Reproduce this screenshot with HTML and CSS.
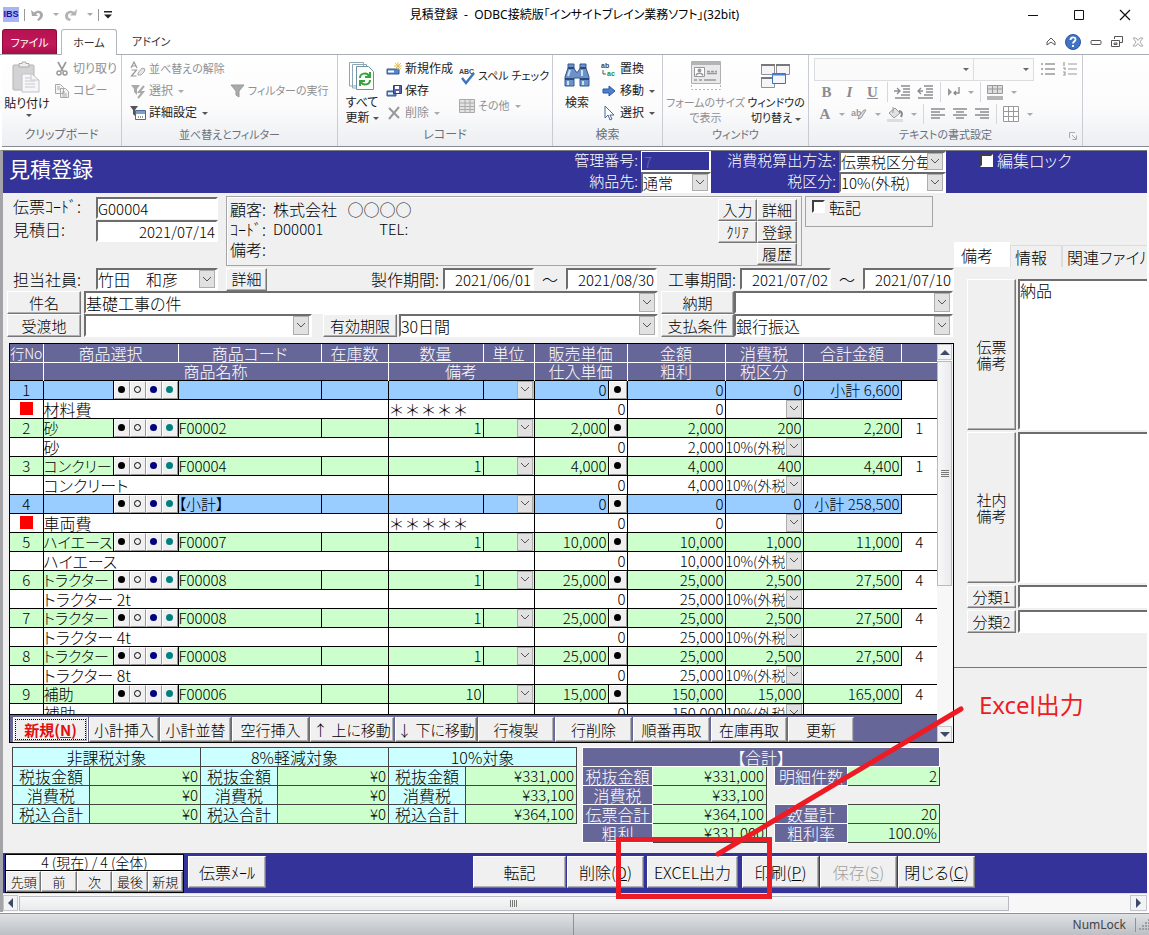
FILE: index.html
```html
<!DOCTYPE html>
<html lang="ja">
<head>
<meta charset="utf-8">
<title>見積登録</title>
<link rel="stylesheet" href="styles.css">
</head>
<body>
<header class="titlebar">
  <div class="quick">
    <span class="logo">IBS</span>
    <i class="sep"></i>
    <svg width="14" height="14" viewBox="0 0 14 14"><path d="M1 2l1 6h6L6 6c2-2 4-1 4 1 0 1.500-1 3-3 4.500l1.500 1.500C11 11.500 13 9.500 13 7c0-4-5-6-9-2.500z" fill="#a9a9ad"/></svg>
    <i class="caret dim"></i>
    <svg width="14" height="14" viewBox="0 0 14 14"><path d="M13 1l-1 6.500H6l2-2C5.500 4.500 4 6 4 8c0 1.500 1 2.500 3 3l-1 2C3 12.500 1 11 1 8c0-4 5-7 9-4z" fill="#b4b4b8"/></svg>
    <i class="caret dim"></i>
    <i class="sep"></i>
    <svg width="8" height="8" viewBox="0 0 8 8"><path d="M0 0h8v1.500H0zM0 3.500h8L4 7.500z" fill="#222"/></svg>
  </div>
  <h1 class="apptitle">見積登録&nbsp; -&nbsp; ODBC接続版「インサイトブレイン業務ソフト」(32bit)</h1>
  <div class="winbtns">
    <button aria-label="最小化"><svg width="12" height="12"><path d="M1 6.500h10" stroke="#111"/></svg></button>
    <button aria-label="最大化"><svg width="12" height="12"><path d="M1.500 1.500h9v9h-9z" fill="none" stroke="#111"/></svg></button>
    <button aria-label="閉じる"><svg width="12" height="12"><path d="M1 1l10 10M11 1L1 11" stroke="#111" stroke-width="1.200"/></svg></button>
  </div>
</header>
<nav class="tabs">
  <button class="tab file">ファイル</button>
  <button class="tab home">ホーム</button>
  <button class="tab">アドイン</button>
  <div class="tabtools">
    <svg width="10" height="10"><path d="M1 5L5 1l4 4v3L5 5 1 8z" fill="#fff" stroke="#555"/></svg>
    <svg width="16" height="16"><circle cx="8" cy="8" r="7.500" fill="#3f74c4" stroke="#2f559c"/><path d="M5.500 6c0-3.500 5-3.500 5-.5 0 2-2.500 2-2.500 4M8 11v2" fill="none" stroke="#fff" stroke-width="1.800"/></svg>
    <svg width="12" height="12"><rect x="1" y="4.500" width="10" height="4" rx="1" fill="#fff" stroke="#555"/></svg>
    <svg width="12" height="12"><path d="M3.500 3V.5h8v6H9M.5 4.500h8v6h-8zM3 7h3v1.500H3z" fill="none" stroke="#555"/></svg>
    <svg width="12" height="10"><path d="M1 1h3l2 2.500L8 1h3L8 5l3 4H8L6 6.500 4 9H1l3-4z" fill="none" stroke="#aaa"/></svg>
  </div>
</nav>
<section class="ribbon">
  <div class="group g1">
    <div class="gbody">
      <button class="big">
        <svg width="30" height="32" viewBox="0 0 30 32"><rect x="1" y="4" width="21" height="25" rx="1" fill="#d3d3d6" stroke="#b4b4b8"/><path d="M7 6V2.500h3V1h4v1.500h3V6z" fill="#eee" stroke="#aaa"/><path d="M10 13h10l7 6v12H10z" fill="#f6f6f8" stroke="#c3c3c8"/><path d="M13 17h6M13 20h10M13 23h10M13 26h10M19 13v6h8" fill="none" stroke="#c9c9d0"/></svg>
        <span>貼り付け</span><i class="caret"></i>
      </button>
      <div class="col">
        <button class="item off"><svg width="16" height="16"><path d="M4 1l5 9M12 1L7 10" stroke="#999" stroke-width="1.600"/><circle cx="5" cy="12" r="2" fill="none" stroke="#999" stroke-width="1.500"/><circle cx="11" cy="12" r="2" fill="none" stroke="#999" stroke-width="1.500"/></svg>切り取り</button>
        <button class="item off"><svg width="16" height="16"><path d="M1.500 1.500h5l3 3v6h-8zM6.500 5.500h5l3 3v6h-8zM3 4h3M3 6h4M8 9h3M8 11h5M8 13h5" fill="#f4f4f4" stroke="#a9a9ad"/></svg>コピー</button>
      </div>
    </div>
    <div class="glabel">クリップボード</div>
  </div>
  <div class="group g2">
    <div class="gbody">
      <div class="col">
        <button class="item off"><svg width="16" height="16"><path d="M1 7l3-6 3 6M2 5h4M1.500 9h5l-5 6h5" fill="none" stroke="#999" stroke-width="1.200"/><path d="M8 12l4-5 3 1-1 3-3 3H8z" fill="#e6e6ea" stroke="#aaa"/></svg><span class="sm">並べ替えの解除</span></button>
        <button class="item off"><svg width="16" height="16"><path d="M1 2h9L7 6v6L4 9V6z" fill="#aaa"/><path d="M14 3L9 9h4l-5 6" fill="none" stroke="#aaa" stroke-width="2"/></svg>選択<i class="caret dim"></i></button>
        <button class="item"><svg width="16" height="16"><path d="M0 1h8L5 5v6L3 9V5z" fill="#555"/><path d="M5.500 5.500h10v9h-10z" fill="#fff" stroke="#49699f"/><path d="M6 6h9v3H6z" fill="#7c9ed0"/><path d="M8 12h1M10 12h1M12 12h1" stroke="#333"/></svg>詳細設定<i class="caret"></i></button>
      </div>
      <div class="col filter">
        <button class="item off"><svg width="16" height="16"><path d="M2 2h13L10 8v6L7 12V8z" fill="#aaaaae" stroke="#999"/></svg><span class="sm">フィルターの実行</span></button>
      </div>
    </div>
    <div class="glabel sm">並べ替えとフィルター</div>
  </div>
  <div class="group g3">
    <div class="gbody">
      <button class="big">
        <svg width="28" height="30" viewBox="0 0 28 30"><path d="M1.500 1.500h14V25h-14zM4.500 3.500h14V27h-14z" fill="#fff" stroke="#8fa7b5"/><path d="M8.500 5.500h12l5 5v18h-17z" fill="#fff" stroke="#6f90a5"/><path d="M12 17c0-5 7-6 9-2M22 11v5h-5M22 19c0 5-7 6-9 2M12 25v-5h5" fill="none" stroke="#36a33c" stroke-width="2"/></svg>
        <span>すべて<br>更新<i class="caret"></i></span>
      </button>
      <div class="col">
        <button class="item"><svg width="16" height="16"><path d="M1 8h12v5H1z" fill="#5b84c2" stroke="#34598f"/><path d="M2 9.500h6v2H2z" fill="#fff"/><path d="M12 1v8M8 5h8M9 2l6 6M15 2L9 8" stroke="#e6bf4c"/></svg>新規作成</button>
        <button class="item"><svg width="16" height="16"><path d="M1 8h9v5H1z" fill="#5b84c2" stroke="#34598f"/><path d="M2 9.500h5v2H2z" fill="#fff"/><path d="M7.500 2.500h8v8h-8z" fill="#5d63a8" stroke="#343a80"/><path d="M9 3h4v3H9zM10 8h3v2h-3z" fill="#fff"/></svg>保存</button>
        <button class="item off"><svg width="16" height="16"><path d="M3 3l10 10M13 2L3 14" stroke="#999" stroke-width="2"/></svg>削除<i class="caret dim"></i></button>
      </div>
      <div class="col two">
        <button class="item"><svg width="16" height="18"><text x="0" y="7" class="tiny">ABC</text><path d="M3 11l4 5 8-10" fill="none" stroke="#3f73bb" stroke-width="2.400"/></svg><span class="sm">スペル チェック</span></button>
        <button class="item off"><svg width="16" height="16"><path d="M.5 1.500h15v13H.5zM0 5h16M0 8.500h16M0 11.500h16M6 1v13M11 1v13" fill="#e3e3e6" stroke="#aaa"/></svg><span class="sm">その他</span><i class="caret dim"></i></button>
      </div>
    </div>
    <div class="glabel">レコード</div>
  </div>
  <div class="group g4">
    <div class="gbody">
      <button class="big">
        <svg width="28" height="30" viewBox="0 0 28 30"><path d="M5 3h6v4l2 4h2l2-4V3h6v4l3 9v9h-9v-8h-6v8H2v-9l3-9z" fill="#6c93c9" stroke="#38598d"/><path d="M2 18h9M17 18h9M5 7h6M17 7h6" stroke="#2d4a7c" stroke-width="2"/><path d="M5 20v4M20 20v4M7 9l-2 6M19 9v6" stroke="#cfe0f5" stroke-width="2"/></svg>
        <span>検索</span>
      </button>
      <div class="col">
        <button class="item"><svg width="16" height="16"><text x="0" y="7" class="tiny">ab</text><text x="6" y="15" class="tiny green">ac</text><path d="M2 9v4h3" fill="none" stroke="#555"/></svg>置換</button>
        <button class="item"><svg width="16" height="16"><path d="M2 6h6V3l6 5-6 5v-3H2z" fill="#4e80d0" stroke="#2b569e"/></svg>移動<i class="caret"></i></button>
        <button class="item"><svg width="16" height="16"><path d="M4 1v12l3-3 2 5 2-1-2-4h4z" fill="#fff" stroke="#49699f"/></svg>選択<i class="caret"></i></button>
      </div>
    </div>
    <div class="glabel">検索</div>
  </div>
  <div class="group g5">
    <div class="gbody">
      <button class="big off">
        <svg width="32" height="30" viewBox="0 0 32 30"><path d="M1.500.5h29v22h-29z" fill="#e9e9ec" stroke="#b0b0b4"/><path d="M1 1h30v3H1z" fill="#b4b4b8"/><path d="M1.500 24v4.500h29V24" fill="none" stroke="#b5b5b8" stroke-dasharray="2 2"/><path d="M4.500 6.500h10v9h-10z" fill="#fff" stroke="#999"/><circle cx="9.500" cy="9.500" r="2" fill="#999"/><path d="M6 14.500c1-3 6-3 7 0M17 10.500h3M21 10.500h3M25 10.500h2M17 12.500h10M4 19h3M9 19h3M14 19h12" stroke="#999" fill="none" stroke-width="1.500"/></svg>
        <span class="sm">フォームのサイズ<br>で表示</span>
      </button>
      <button class="big">
        <svg width="32" height="30" viewBox="0 0 32 30"><path d="M1.500 3.500h13v10h-13zM16.500 3.500h13v10h-13zM1.500 16.500h13v10h-13z" fill="#f5f5f7" stroke="#8f8f94"/><path d="M1 4h14M16 4h14M1 17h14" stroke="#77777c" stroke-width="2"/><path d="M12.500 12.500h13v10h-13z" fill="#f3f8ff" stroke="#3e6fbe"/><path d="M12 13.500h14" stroke="#4a7ed0" stroke-width="2"/></svg>
        <span class="sm">ウィンドウの<br>切り替え<i class="caret"></i></span>
      </button>
    </div>
    <div class="glabel sm">ウィンドウ</div>
  </div>
  <div class="group g6">
    <div class="gbody text">
      <div class="trow">
        <select class="fontsel wide" aria-label="フォント" disabled><option></option></select>
        <select class="fontsel" aria-label="フォント サイズ" disabled><option></option></select>
        <svg class="lst" width="16" height="14"><path d="M5 2h10M5 7h10M5 12h10M1 2h2M1 7h2M1 12h2" stroke="#999" stroke-width="1.400"/></svg>
        <svg class="lst" width="16" height="14"><path d="M6 2h9M6 7h9M6 12h9M2 0v4M1 6h2v2M1 10h2v3H1" stroke="#999" fill="none" stroke-width="1.200"/></svg>
      </div>
      <div class="trow fmt">
        <b>B</b><em>I</em><u>U</u><i class="vsep"></i>
        <svg width="17" height="14"><path d="M7 1h9M9 4h7M9 7h7M7 10h9M1 13h15M0 6h5M3 3l3 3-3 3" stroke="#8c8c90" fill="none" stroke-width="1.300"/></svg>
        <svg width="17" height="14"><path d="M7 1h9M9 4h7M9 7h7M7 10h9M1 13h15M1 6h5M4 3L1 6l3 3" stroke="#8c8c90" fill="none" stroke-width="1.300"/></svg>
        <i class="vsep"></i>
        <svg width="14" height="12"><path d="M1 2l4 4-4 4z" fill="#999"/><path d="M12 1v6H7M9 5L7 7l2 2" fill="none" stroke="#888" stroke-width="1.300"/></svg><i class="caret dim"></i><i class="vsep"></i>
        <svg width="17" height="17"><path d="M.5 1.500h15v8H.5zM0 5h16M5.500 1v9M10.500 1v9" fill="#ddd" stroke="#999"/><path d="M0 12h16v4H0z" fill="#b5b5b8"/></svg><i class="caret dim"></i>
      </div>
      <div class="trow fmt two">
        <b>A</b><i class="caret dim"></i>
        <svg width="17" height="14"><text x="0" y="9" class="mark">ab</text><path d="M15 3l-5 8-3 1 1-3 5-6z" fill="#ddd" stroke="#999"/></svg><i class="caret dim"></i>
        <svg width="17" height="16"><path d="M2 7l6-5 5 5-6 5zM6 1v6" fill="#e2e2e5" stroke="#999"/><path d="M12 5c4 1 3 4 2 6" stroke="#888" stroke-width="2" fill="none"/><path d="M0 13h16v3H0z" fill="#ddd"/></svg><i class="caret dim"></i><i class="vsep"></i>
        <svg width="16" height="12"><path d="M1 1h14M1 4h9M1 7h14M1 10h9" stroke="#8c8c90" stroke-width="1.300"/></svg>
        <svg width="16" height="12"><path d="M1 1h14M4 4h8M1 7h14M4 10h8" stroke="#8c8c90" stroke-width="1.300"/></svg>
        <svg width="16" height="12"><path d="M1 1h14M6 4h9M1 7h14M6 10h9" stroke="#8c8c90" stroke-width="1.300"/></svg>
        <i class="vsep"></i>
        <svg width="17" height="17"><path d="M.5.5h15v15H.5zM.5 5.500h15M.5 10.500h15M5.500.5v15M10.500.5v15" fill="#fff" stroke="#999"/></svg><i class="caret dim"></i>
      </div>
    </div>
    <div class="glabel sm">テキストの書式設定<svg class="launch" width="8" height="8"><path d="M.5 6V.5H6M3 3l4 4M7.500 3.500v4h-4" fill="none" stroke="#aaa"/></svg></div>
  </div>
</section>

<main class="form">
  <div class="band">
    <h2>見積登録</h2>
    <label for="kanri">管理番号:</label><input id="kanri" class="dark" value="7">
    <label for="houhou">消費税算出方法:</label><select id="houhou"><option>伝票税区分毎</option></select>
    <label class="lock"><input type="checkbox">編集ロック</label>
    <label for="nouhin" class="r2">納品先:</label><select id="nouhin"><option>通常</option></select>
    <label for="zei">税区分:</label><select id="zei"><option>10%(外税)</option></select>
  </div>

  <div class="work">
    <div class="left">
      <div class="top">
        <div class="slip">
          <label for="code">伝票ｺｰﾄﾞ:</label><input id="code" class="sunk" value="G00004">
          <label for="day">見積日:</label><input id="day" class="sunk date" value="2021/07/14">
        </div>
        <div class="customer">
          <dl>
            <dt>顧客:</dt><dd>株式会社&nbsp;&nbsp; <span class="full">○○○○</span></dd>
            <dt>ｺｰﾄﾞ:</dt><dd class="codes"><span>D00001</span><span>TEL:</span></dd>
            <dt>備考:</dt><dd></dd>
          </dl>
          <div class="cbtns">
            <button class="btn">入力</button><button class="btn">詳細</button>
            <button class="btn">ｸﾘｱ</button><button class="btn">登録</button>
            <button class="btn last">履歴</button>
          </div>
        </div>
        <div class="post"><label><input type="checkbox">転記</label></div>
      </div>
      <div class="period">
        <label for="tanto" class="lead">担当社員:</label>
        <select id="tanto" class="sunk"><option>竹田　和彦</option></select>
        <button class="btn detail">詳細</button>
        <label for="p1" class="term">製作期間:</label><input id="p1" class="sunk date" value="2021/06/01"><span>～</span><input class="sunk date" aria-label="製作期間 終了" value="2021/08/30">
        <label for="p2" class="term next">工事期間:</label><input id="p2" class="sunk date" value="2021/07/02"><span>～</span><input class="sunk date" aria-label="工事期間 終了" value="2021/07/10">
      </div>
      <div class="subject">
        <button class="btn">件名</button><select class="sunk" aria-label="件名"><option>基礎工事の件</option></select>
        <button class="btn">納期</button><select class="sunk" aria-label="納期"><option></option></select>
        <button class="btn">受渡地</button>
        <div class="split"><select class="sunk" aria-label="受渡地"><option></option></select><button class="btn">有効期限</button><select class="sunk" aria-label="有効期限"><option>30日間</option></select></div>
        <button class="btn">支払条件</button><select class="sunk" aria-label="支払条件"><option>銀行振込</option></select>
      </div>

      <div class="sheet">
        <div class="pane">
          <div class="clip">
            <table class="lines">
              <colgroup><col class="c33"><col class="c70"><col class="c65"><col class="c143"><col class="c67"><col class="c95"><col class="c51"><col class="c74"><col class="c19"><col class="c98"><col class="c78"><col class="c98"><col></colgroup>
              <thead>
                <tr><th class="no">行No</th><th colspan="2">商品選択</th><th>商品コード</th><th>在庫数</th><th>数量</th><th>単位</th><th colspan="2">販売単価</th><th>金額</th><th>消費税</th><th>合計金額</th><th class="none"></th></tr>
                <tr><th></th><th colspan="4">商品名称</th><th colspan="2">備考</th><th colspan="2">仕入単価</th><th>粗利</th><th>税区分</th><th colspan="2" class="tail"></th></tr>
              </thead>
              <tbody id="rows"></tbody>
            </table>
          </div>
          <div class="tools">
            <button class="btn new">新規(<u>N</u>)</button><button class="btn">小計挿入</button><button class="btn">小計並替</button><button class="btn">空行挿入</button><button class="btn">↑ 上に移動</button><button class="btn">↓ 下に移動</button><button class="btn">行複製</button><button class="btn">行削除</button><button class="btn">順番再取</button><button class="btn">在庫再取</button><button class="btn">更新</button>
          </div>
        </div>
        <div class="vscroll">
          <button aria-label="上へ"><i class="up"></i></button>
          <div class="thumb"><i></i></div>
          <button aria-label="下へ" class="end"><i class="down"></i></button>
        </div>
      </div>

      <div class="totals">
        <table class="rates">
          <colgroup><col class="c77"><col class="c111"><col class="c77"><col class="c111"><col class="c77"><col class="c111"></colgroup>
          <tr><th colspan="2">非課税対象</th><th colspan="2">8%軽減対象</th><th colspan="2">10%対象</th></tr>
          <tr><th>税抜金額</th><td>¥0</td><th>税抜金額</th><td>¥0</td><th>税抜金額</th><td>¥331,000</td></tr>
          <tr><th>消費税</th><td>¥0</td><th>消費税</th><td>¥0</td><th>消費税</th><td>¥33,100</td></tr>
          <tr><th>税込合計</th><td>¥0</td><th>税込合計</th><td>¥0</td><th>税込合計</th><td>¥364,100</td></tr>
        </table>
        <table class="sum">
          <colgroup><col class="c70"><col class="c114"><col class="c8"><col class="c73"><col class="c92"></colgroup>
          <tr><th colspan="5">【合計】</th></tr>
          <tr><th>税抜金額</th><td>¥331,000</td><td class="gap"></td><th>明細件数</th><td>2</td></tr>
          <tr><th>消費税</th><td>¥33,100</td><td class="gap" colspan="3"></td></tr>
          <tr><th>伝票合計</th><td>¥364,100</td><td class="gap"></td><th>数量計</th><td>20</td></tr>
          <tr><th>粗利</th><td>¥331,000</td><td class="gap"></td><th>粗利率</th><td>100.0%</td></tr>
        </table>
      </div>
    </div>

    <aside class="side">
      <div class="sidetabs"><button class="on">備考</button><button>情報</button><button>関連ファイル</button></div>
      <div class="sidebody">
        <button class="btn">伝票<br>備考</button><textarea class="sunk" aria-label="伝票備考">納品</textarea>
        <button class="btn">社内<br>備考</button><textarea class="sunk" aria-label="社内備考"></textarea>
        <button class="btn">分類1</button><input class="sunk" aria-label="分類1">
        <button class="btn">分類2</button><input class="sunk" aria-label="分類2">
      </div>
    </aside>
  </div>

  <footer class="actions">
    <div class="nav">
      <div class="pos">4 (現在) / 4 (全体)</div>
      <button class="btn">先頭</button><button class="btn">前</button><button class="btn">次</button><button class="btn">最後</button><button class="btn">新規</button>
    </div>
    <button class="btn act mail">伝票ﾒｰﾙ</button>
    <button class="btn act post2">転記</button>
    <button class="btn act">削除(<u>D</u>)</button>
    <button class="btn act excel">EXCEL出力</button>
    <button class="btn act print">印刷(<u>P</u>)</button>
    <button class="btn act" disabled>保存(<u>S</u>)</button>
    <button class="btn act">閉じる(<u>C</u>)</button>
  </footer>
  <div class="hscroll">
    <button aria-label="左へ"><i class="lt"></i></button>
    <div class="thumb"><i></i></div>
    <button aria-label="右へ" class="end"><i class="rt"></i></button>
  </div>

  <div class="note">
    <svg width="360" height="212" viewBox="0 0 360 212"><rect x="5.500" y="148.500" width="151" height="57" fill="none" stroke="#ed1c24" stroke-width="5"/><path d="M105 163L348 18" stroke="#ed1c24" stroke-width="5" stroke-linecap="round"/></svg>
    <span>Excel出力</span>
  </div>
</main>
<div class="status"><span>NumLock</span><svg width="14" height="14"><path d="M11 2h2M8 5h2M11 5h2M5 8h2M8 8h2M11 8h2M2 11h2M5 11h2M8 11h2M11 11h2" stroke="#9a9fa6" stroke-width="2"/></svg></div>
<script src="app.js"></script>
</body>
</html>
```

FILE: styles.css
```css
* { box-sizing: border-box; }
html, body { height: 100%; }
body {
  margin: 0;
  display: flex;
  flex-direction: column;
  background: #fff;
  color: #000;
  font: 300 16px/18px "Noto Sans CJK JP", "Liberation Sans", sans-serif;
  font-feature-settings: "palt";
  overflow: hidden;
}
button, input, select, textarea {
  font: inherit;
  font-feature-settings: inherit;
  color: inherit;
  margin: 0;
  padding: 0;
  border-radius: 0;
}
button { border: 0; background: none; white-space: nowrap; }
svg { flex: none; }
.full { font-feature-settings: normal; }

/* window frame */
.titlebar, .tabs, .ribbon, .status { font-family: "Noto Sans", "Noto Sans CJK JP", sans-serif; font-size: 12px; font-weight: 400; }
.titlebar { display: grid; grid-template-columns: 1fr auto 1fr; align-items: center; height: 29px; flex: none; }
.quick { display: flex; align-items: center; gap: 5px; padding-left: 3px; }
.logo { width: 16px; height: 15px; background: #a9b4f3; color: #1010b0; text-align: center; font: bold 9px/15px "Liberation Sans", sans-serif; }
.sep { width: 1px; height: 12px; background: #999; }
.apptitle { margin: 0; font-size: 12px; font-weight: 400; line-height: 18px; }
.winbtns { display: flex; justify-content: flex-end; gap: 34px; padding-right: 18px; }
.winbtns button { display: flex; }
.caret { display: inline-block; flex: none; border: 3px solid transparent; border-top-color: #555; border-bottom: 0; margin-left: 4px; vertical-align: middle; }
.caret.dim { border-top-color: #aaa; }

.tabs { display: flex; height: 26px; flex: none; align-items: flex-end; padding-left: 2px; border-bottom: 1px solid #a9adb6; }
.tab { height: 25px; padding: 0 15px; line-height: 25px; color: #333; font-size: 11px; }
.tab.file { width: 55px; padding: 0; margin-right: 4px; background: linear-gradient(#b5124f, #c2185c 60%, #a80d45); border: 1px solid #8c0a3a; border-bottom: 0; border-radius: 3px 3px 0 0; color: #fff; line-height: 23px; }
.tab.home { width: 56px; height: 26px; padding: 0; margin-bottom: -1px; background: #fff; border: 1px solid #b2b6be; border-bottom: 0; border-radius: 3px 3px 0 0; }
.tabtools { margin-left: auto; display: flex; align-items: center; gap: 9px; height: 25px; padding-right: 5px; }

.ribbon { display: flex; height: 92px; flex: none; margin: 0 0 0 2px; background: linear-gradient(#fff, #fbfbfc 60%, #eceef1); border-bottom: 1px solid #868a94; color: #222; }
.group { display: flex; flex-direction: column; flex: none; padding-top: 2px; border-right: 1px solid #c9ccd2; }
.gbody { display: flex; flex: 1; align-items: flex-start; }
.glabel { height: 20px; line-height: 18px; text-align: center; color: #6a6f7a; position: relative; }
.sm { font-size: 11px; }
.launch { position: absolute; right: 5px; top: 6px; }
.g1 { width: 120px; } .g2 { width: 216px; } .g3 { width: 215px; }
.g4 { width: 110px; } .g5 { width: 146px; } .g6 { width: 274px; }
.big { display: flex; flex-direction: column; align-items: center; line-height: 15px; gap: 3px; padding-top: 4px; color: #222; }
.big.off { color: #8f9094; }
.big .caret { margin-left: 3px; }
.g1 .big { width: 50px; margin-right: 2px; }
.g3 .big { width: 48px; gap: 4px; }
.g4 .big { width: 44px; margin-left: 2px; gap: 4px; }
.g5 .big { width: 82px; padding-left: 3px; gap: 4px; }
.g5 .big + .big { width: 62px; padding-left: 0; }
.col { display: flex; flex-direction: column; padding-top: 1px; }
.g2 .col { padding-left: 8px; }
.g2 .filter { padding: 23px 0 0 4px; }
.g3 .two { padding: 8px 0 0 6px; gap: 8px; }
.g4 .col { padding-left: 2px; }
.item { display: flex; align-items: center; gap: 3px; height: 22px; color: #222; }
.item.off { color: #8f9094; }
.item .caret { margin-left: 2px; }
.tiny { font: bold 7px "Liberation Sans", sans-serif; fill: #444; }
.tiny.green { fill: #2c8a34; }
.mark { font: bold 9px "Liberation Sans", sans-serif; fill: #999; }
.gbody.text { flex-direction: column; padding-left: 5px; gap: 0; }
.trow { display: flex; align-items: center; height: 24px; }
.trow.fmt { height: 22px; gap: 6px; color: #8c8c90; font: 15px "Liberation Serif", serif; padding-left: 4px; }
.trow.fmt b, .trow.fmt em, .trow.fmt u { width: 17px; text-align: center; font-weight: 700; }
.trow.fmt .caret { margin-left: 1px; }
.trow.two b { width: 14px; }
.vsep { width: 1px; height: 20px; background: #d5d7db; }
.fontsel { appearance: none; width: 61px; height: 23px; margin-left: -1px; border: 1px solid #dcdde0; opacity: 1; background: url("data:image/svg+xml,%3Csvg xmlns='http://www.w3.org/2000/svg' width='6' height='3'%3E%3Cpath d='M0 0h6L3 3z' fill='%23666'/%3E%3C/svg%3E") right 4px center no-repeat #fafafa; }
.fontsel.wide { width: 160px; margin-left: 0; }
.lst { margin-left: 6px; }

/* form */
.form { position: relative; display: flex; flex-direction: column; flex: none; margin: 3px 2px 0 0; border-left: 3px solid #a3a3a8; border-top: 1px solid #77777d; background: #f0f0f0; }
.band { display: grid; grid-template-columns: 563px 69px 70px 122px 107px 1fr; grid-template-rows: 21px 21px; column-gap: 3px; background: #333399; color: #fff; font-size: 15px; }
.band h2 { grid-row: span 2; margin: 0; padding: 5px 6px; font-size: 21px; line-height: 24px; font-weight: 400; }
.band label { text-align: right; line-height: 18px; white-space: nowrap; }
.band .lock { text-align: left; padding-left: 31px; display: flex; align-items: center; gap: 4px; font-size: 16px; height: 18px; }
.band .r2 { grid-column: 2; }
select {
  appearance: none;
  min-width: 0;
  border: 0;
  padding: 0 18px 0 0;
  color: #000;
  background:
    url("data:image/svg+xml,%3Csvg xmlns='http://www.w3.org/2000/svg' width='8' height='5'%3E%3Cpath d='M0 0l4 4 4-4' fill='none' stroke='%23555'/%3E%3C/svg%3E") right 5px center no-repeat,
    linear-gradient(#e1e1e1, #e1e1e1) right 2px center / 14px calc(100% - 2px) no-repeat,
    linear-gradient(#adadad, #adadad) right 1px center / 16px 100% no-repeat,
    #fff;
}
.band select, .band .dark { width: 100%; height: 21px; border: 2px solid; border-color: #696969 #fff #fff #696969; }
.band select { padding-right: 17px; line-height: 16px; }
.band .dark { background: #333399; color: #6b6fae; border-color: #fff; border-width: 1px 2px 2px 1px; padding-left: 2px; }
input[type="checkbox"] { appearance: none; flex: none; width: 13px; height: 13px; background: #fff; border: 2px solid; border-color: #404040 #fff #fff #404040; }
.sunk { min-width: 0; border: 2px solid; border-color: #6d6d6d #fff #fff #6d6d6d; background-color: #fff; height: 22px; }
input.sunk { font-size: 15px; }
input.date { text-align: right; padding-right: 1px; }
.btn { background: #f0f0f0; border: 1px solid; border-color: #fff #777 #777 #fff; box-shadow: inset -1px -1px #b0b0b0; font-size: 15px; line-height: 18px; color: #000; overflow: hidden; }

.work { display: flex; }
.left { flex: 0 0 951px; }
.top { display: flex; align-items: flex-start; height: 74px; padding-top: 3px; }
.slip { display: grid; grid-template-columns: 83px 122px; grid-template-rows: 22px 22px; row-gap: 1px; margin: 1px 8px 0 10px; }
.slip label { line-height: 18px; }
.customer { display: flex; justify-content: space-between; width: 576px; height: 70px; border: 1px solid #a5a5a5; box-shadow: inset 1px 1px #fff; padding: 2px 4px 0 3px; margin-right: 3px; }
.customer dl { display: grid; grid-template-columns: 43px 1fr; grid-auto-rows: 20px; margin: 0; line-height: 20px; }
.customer dd { margin: 0; }
.codes { display: flex; gap: 56px; font-size: 15px; }
.cbtns { display: grid; grid-template-columns: 39px 40px; grid-auto-rows: 22px; }
.cbtns .last { grid-column: 2; }
.post { width: 128px; height: 31px; border: 1px solid #a5a5a5; padding: 1px 6px; }
.post label { display: flex; align-items: center; gap: 4px; line-height: 18px; }
.post input { align-self: flex-start; margin-top: 2px; }
.period { display: flex; align-items: center; height: 24px; overflow: hidden; white-space: nowrap; }
.period .lead { width: 83px; margin-left: 10px; }
.period > * { flex: none; }
.period #tanto { width: 122px; }
.period .detail { width: 41px; height: 23px; margin-left: 8px; }
.period .term { width: 72px; margin-left: 104px; line-height: 20px; }
.period .term.next { margin-left: 11px; }
.period .date { width: 91px; }
.period span { width: 32px; text-align: center; }
.subject { display: grid; grid-template-columns: 74px 574px 73px 1fr; grid-template-rows: 23px 23px; column-gap: 3px; padding: 0 0 0 4px; margin-right: 1px; }
.subject select { height: 23px; }
.subject > :nth-child(4n+4) { margin-left: -3px; }
.split { display: grid; grid-template-columns: 228px 83px 1fr; column-gap: 2px; }
.split .btn { margin-left: 9px; }

/* line item sheet */
.sheet { display: flex; margin: 6px 0 0 6px; border: 1px solid #000; width: 945px; height: 400px; background: #fff; }
.pane { flex: 1; display: flex; flex-direction: column; min-width: 0; }
.clip { flex: 1; overflow: hidden; border-bottom: 1px solid #000; }
table { border-collapse: collapse; table-layout: fixed; }
th, td { padding: 0; font-weight: inherit; white-space: nowrap; overflow: hidden; }
.c8 { width: 8px; } .c19 { width: 19px; } .c33 { width: 33px; } .c51 { width: 51px; }
.c65 { width: 65px; } .c67 { width: 67px; } .c70 { width: 70px; } .c73 { width: 73px; }
.c74 { width: 74px; } .c77 { width: 77px; } .c78 { width: 78px; } .c92 { width: 92px; }
.c95 { width: 95px; } .c98 { width: 98px; } .c111 { width: 111px; } .c114 { width: 114px; }
.c143 { width: 143px; }
.lines { width: 100%; line-height: 16px; }
.lines tr { height: 19px; }
.lines thead tr { height: 18px; }
.lines th { background: #666699; color: #fff; border: 1px solid #fff; border-top: 0; line-height: 16px; }
.lines th:first-child { border-left: 0; }
.lines .no { font-size: 14px; }
.lines thead tr:last-child th { border-bottom: 0; }
.lines .none { border: 0; border-left: 1px solid #fff; }
.lines .tail { border: 0; border-left: 1px solid #fff; }
.lines td { border-left: 1px solid #000; height: 19px; }
.lines td:first-child { text-align: center; border-left: 0; }
.r1 td { border-top: 1px solid #000; border-bottom: 1px solid #000; background: #ccffcc; }
.sub td { background: #99ccff; }
.r1 td.rate { border-bottom: 0; background: #fff; text-align: center; }
.r1 td.code, .r1 td.item2, .r1 td:first-child, .r1 td.rate { font-size: 15px; }
.num { font-size: 15px; text-align: right; }
.lines .num { padding-right: 1px; }
.flag { display: block; width: 13px; height: 13px; margin: 0 auto; background: #f00; }
.dots { display: grid; grid-template-columns: repeat(4, 1fr); height: 18px; }
.dot { height: 18px; width: 100%; display: flex; align-items: center; justify-content: center; background: #f0f0f0; border: 1px solid; border-color: #fff #999 #999 #fff; }
.dot i { width: 7px; height: 7px; border-radius: 50%; background: #000; }
.dot .o { background: none; border: 1px solid #000; }
.dot .n { background: #000080; }
.dot .t { background: #008080; }
.lines select { display: block; width: 100%; height: 18px; line-height: 16px; background-color: transparent; }
.lines .tax { font-size: 14px; }
.tools { display: grid; grid-template-columns: 75px 70px 71px 77px 84px 82px 76px 77px 77px 76px 66px; column-gap: 1px; background: #666699; height: 27px; padding: 2px 0 0 3px; }
.tools .new { color: #e01010; font-weight: 700; border: 1px solid #fff; outline: 1px dotted #000; outline-offset: -3px; }
.vscroll { width: 16px; flex: none; display: flex; flex-direction: column; background: #f7f7f8; }
.vscroll button, .hscroll button { width: 15px; height: 16px; display: flex; align-items: center; justify-content: center; border: 1px solid #c3c5ca; background: #f2f3f5; }
.end { margin-top: auto; }
.vscroll .thumb { width: 15px; height: 225px; margin-top: 1px; border: 1px solid #b8bac0; background: linear-gradient(90deg, #f8f8f9, #e9eaec); display: flex; align-items: center; justify-content: center; }
.vscroll .thumb i { width: 8px; height: 7px; background: repeating-linear-gradient(#777 0 1px, transparent 1px 2px); }
.up, .down, .lt, .rt { border: 5px solid transparent; }
.up { border-bottom-color: #3e4a68; border-top: 0; }
.down { border-top-color: #3e4a68; border-bottom: 0; }
.lt { border-right-color: #3e4a68; border-left: 0; }
.rt { border-left-color: #3e4a68; border-right: 0; }

/* totals */
.totals { display: flex; align-items: flex-start; gap: 5px; padding: 4px 0 0 9px; height: 110px; }
.totals tr { height: 19px; }
.totals table { line-height: 16px; }
.rates { width: 565px; }
.rates th, .rates td { border: 1px solid #444; height: 19px; }
.rates th { background: #ccffff; }
.rates td, .sum td { background: #ccffcc; font-size: 15px; text-align: right; padding-right: 2px; }
.sum { width: 357px; }
.sum th { background: #666699; color: #fff; border: 1px solid #fff; height: 19px; }
.sum td { border: 1px solid #444; }
.sum td.gap { background: none; border: 0; }

/* side panel */
.side { flex: 1; min-width: 0; overflow: hidden; padding-top: 50px; }
.sidetabs { display: flex; height: 24px; align-items: flex-end; }
.sidetabs button { height: 22px; flex: none; width: 52px; border: 1px solid #dcdcdc; border-bottom: 0; text-align: left; padding-left: 4px; background: #f0f0f0; }
.sidetabs button:last-child { width: 110px; }
.sidetabs .on { width: 56px; height: 25px; background: #fff; padding-left: 7px; border: 0; }
.sidebody { display: grid; grid-template-columns: 49px 1fr; grid-template-rows: 151px 151px 23px 23px; column-gap: 2px; row-gap: 2px; height: 401px; padding: 12px 0 0 13px; border-bottom: 1px solid #777; }
.sidebody .btn { line-height: 16px; }
.sidebody .sunk { width: 100%; height: 100%; border-right: 0; resize: none; display: block; line-height: 18px; }

/* footer */
.actions { display: flex; align-items: flex-start; background: #333399; height: 40px; padding: 1px 0 0 2px; }
.nav { display: grid; grid-template-columns: repeat(5, 1fr); width: 179px; flex: none; border: 1px solid #000; }
.nav .pos { grid-column: span 5; height: 16px; line-height: 15px; font-size: 14px; background: #fff; text-align: center; border-bottom: 1px solid #000; }
.nav .btn { font-size: 13px; height: 21px; }
.act { flex: none; width: 77px; height: 32px; margin: 2px 0 0 1px; font-size: 16px; }
.mail { width: 78px; margin-left: 4px; }
.post2 { width: 93px; margin-left: 207px; }
.excel { width: 91px; margin-left: 3px; }
.print { margin-left: 4px; }
.act:disabled { color: #a0a0a0; }
.hscroll { display: flex; align-items: center; height: 19px; background: #f7f7f8; border-top: 1px solid #ddd; }
.hscroll .thumb { flex: 0 1 990px; height: 15px; margin-left: 1px; border: 1px solid #b8bac0; background: linear-gradient(#f8f8f9, #e9eaec); display: flex; align-items: center; justify-content: center; }
.hscroll .thumb i { width: 8px; height: 7px; background: repeating-linear-gradient(90deg, #777 0 1px, transparent 1px 2px); }
.hscroll .end { margin: 0 0 0 auto; width: 17px; }

/* callout over the form */
.note { position: absolute; left: 610px; top: 540px; display: flex; align-items: flex-start; pointer-events: none; color: #ed1c24; }
.note span { font: 400 24px/28px "Noto Sans", "Noto Sans CJK JP", sans-serif; white-space: nowrap; margin-left: 6px; }

.status { display: flex; align-items: center; justify-content: flex-end; gap: 9px; flex: 1 0 22px; margin-top: 1px; border-top: 1px solid #8f9399; background: linear-gradient(90deg, transparent 573px, #8d9198 573px 574px, transparent 574px), linear-gradient(#dfe1e4, #bcc0c5); color: #444; }
.status svg { border-left: 1px solid #8d9198; padding-left: 1px; }
```

FILE: app.js
```javascript
const lines = [
  { sub: true, item: "", code: "", name: "材料費", price: "0", amount: "0", tax: "0", total: "小計 6,600", profit: "0" },
  { item: "砂", code: "F00002", name: "砂", qty: "1", price: "2,000", amount: "2,000", tax: "200", total: "2,200", profit: "2,000", rate: "1" },
  { item: "コンクリー", code: "F00004", name: "コンクリート", qty: "1", price: "4,000", amount: "4,000", tax: "400", total: "4,400", profit: "4,000", rate: "1" },
  { sub: true, item: "", code: "【小計】", name: "車両費", price: "0", amount: "0", tax: "0", total: "小計 258,500", profit: "0" },
  { item: "ハイエース", code: "F00007", name: "ハイエース", qty: "1", price: "10,000", amount: "10,000", tax: "1,000", total: "11,000", profit: "10,000", rate: "4" },
  { item: "トラクター", code: "F00008", name: "トラクター 2t", qty: "1", price: "25,000", amount: "25,000", tax: "2,500", total: "27,500", profit: "25,000", rate: "4" },
  { item: "トラクター", code: "F00008", name: "トラクター 4t", qty: "1", price: "25,000", amount: "25,000", tax: "2,500", total: "27,500", profit: "25,000", rate: "4" },
  { item: "トラクター", code: "F00008", name: "トラクター 8t", qty: "1", price: "25,000", amount: "25,000", tax: "2,500", total: "27,500", profit: "25,000", rate: "4" },
  { item: "補助", code: "F00006", name: "補助", qty: "10", price: "15,000", amount: "150,000", tax: "15,000", total: "165,000", profit: "150,000", rate: "4" }
];
const dot = (kind) => `<button class="dot" aria-label="選択"><i class="${kind}"></i></button>`;
document.getElementById("rows").innerHTML = lines.map((l, i) => `
  <tr class="r1${l.sub ? " sub" : ""}">
    <td>${i + 1}</td><td class="item2">${l.item}</td>
    <td><div class="dots">${dot("")}${dot("o")}${dot("n")}${dot("t")}</div></td>
    <td class="code">${l.code}</td><td></td>
    <td class="num">${l.qty || ""}</td>
    <td><select aria-label="単位"><option></option></select></td>
    <td class="num">${l.price}</td><td>${dot("")}</td>
    <td class="num">${l.amount}</td><td class="num">${l.tax}</td><td class="num">${l.total}</td>
    <td class="rate">${l.rate || ""}</td>
  </tr>
  <tr class="r2">
    <td>${l.sub ? '<i class="flag"></i>' : ""}</td>
    <td colspan="4">${l.name}</td>
    <td colspan="2" class="full">${l.sub ? "＊＊＊＊＊" : ""}</td>
    <td colspan="2" class="num">0</td>
    <td class="num">${l.profit}</td>
    <td><select class="tax" aria-label="税区分"><option>${l.sub ? "" : "10%(外税)"}</option></select></td>
    <td colspan="2"></td>
  </tr>`).join("");
```
